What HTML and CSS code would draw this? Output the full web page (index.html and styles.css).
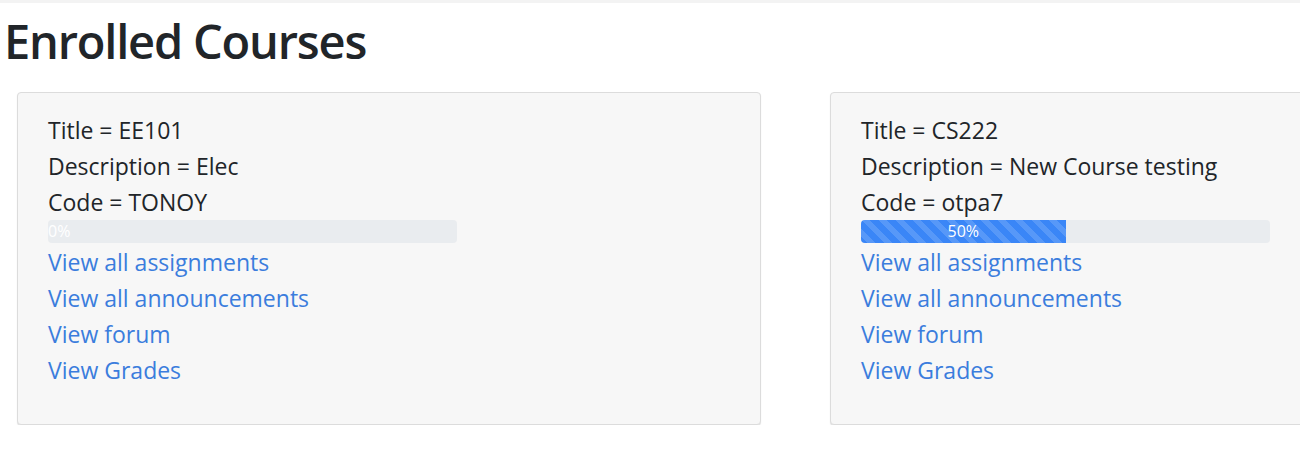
FILE: index.html
```html
<!DOCTYPE html>
<html>
<head>
<meta charset="utf-8">
<title>Enrolled Courses</title>
<link rel="stylesheet" href="styles.css">
</head>
<body>
<div class="topbar"></div>
<main class="page">
  <h1 class="heading">Enrolled Courses</h1>
  <div class="cards">
    <div class="card">
      <p class="line">Title = EE101</p>
      <p class="line">Description = Elec</p>
      <p class="line">Code = TONOY</p>
      <div class="progress">
        <div class="progress-bar" style="width: 0%">0%</div>
      </div>
      <a class="link" href="#">View all assignments</a>
      <a class="link" href="#">View all announcements</a>
      <a class="link" href="#">View forum</a>
      <a class="link" href="#">View Grades</a>
    </div>
    <div class="card">
      <p class="line">Title = CS222</p>
      <p class="line">Description = New Course testing</p>
      <p class="line">Code = otpa7</p>
      <div class="progress">
        <div class="progress-bar" style="width: 50%">50%</div>
      </div>
      <a class="link" href="#">View all assignments</a>
      <a class="link" href="#">View all announcements</a>
      <a class="link" href="#">View forum</a>
      <a class="link" href="#">View Grades</a>
    </div>
  </div>
</main>
</body>
</html>
```

FILE: styles.css
```css
html, body {
  margin: 0;
  padding: 0;
  overflow: hidden;
  background: #fff;
}
body {
  font-family: "Open Sans", "Noto Sans", sans-serif;
  color: #212529;
}
.topbar {
  height: 3px;
  background: #f3f3f3;
}
.page {
  padding: 0 0 0 6px;
}
.heading {
  margin: 0 0 0 -2px;
  font-size: 47px;
  font-weight: 600;
  line-height: 76px;
  letter-spacing: -1.2px;
}
.cards {
  display: flex;
  gap: 69px;
  margin-top: 13px;
  padding-left: 11px;
}
.card {
  flex: 0 0 744px;
  box-sizing: border-box;
  width: 744px;
  background: #f7f7f7;
  border: 1px solid #dcdcdc;
  border-radius: 4px;
  box-shadow: 0 1px 1px rgba(0,0,0,0.12);
  padding: 19px 30px 36px;
  display: flex;
  flex-direction: column;
  align-items: flex-start;
}
.line {
  margin: 0;
  font-size: 23px;
  line-height: 36px;
}
.progress {
  width: 60%;
  height: 23px;
  margin-bottom: 1px;
  background: #e9ecef;
  border-radius: 4px;
  overflow: hidden;
  display: flex;
}
.progress-bar {
  height: 100%;
  background-color: #3a86f7;
  background-image: linear-gradient(45deg, rgba(255,255,255,.15) 25%, transparent 25%, transparent 50%, rgba(255,255,255,.15) 50%, rgba(255,255,255,.15) 75%, transparent 75%, transparent);
  background-size: 17px 17px;
  color: #fff;
  font-size: 16px;
  line-height: 23px;
  text-align: center;
  white-space: nowrap;
}
.link {
  font-size: 23px;
  line-height: 36px;
  color: #3b7ddd;
  text-decoration: none;
}
```
